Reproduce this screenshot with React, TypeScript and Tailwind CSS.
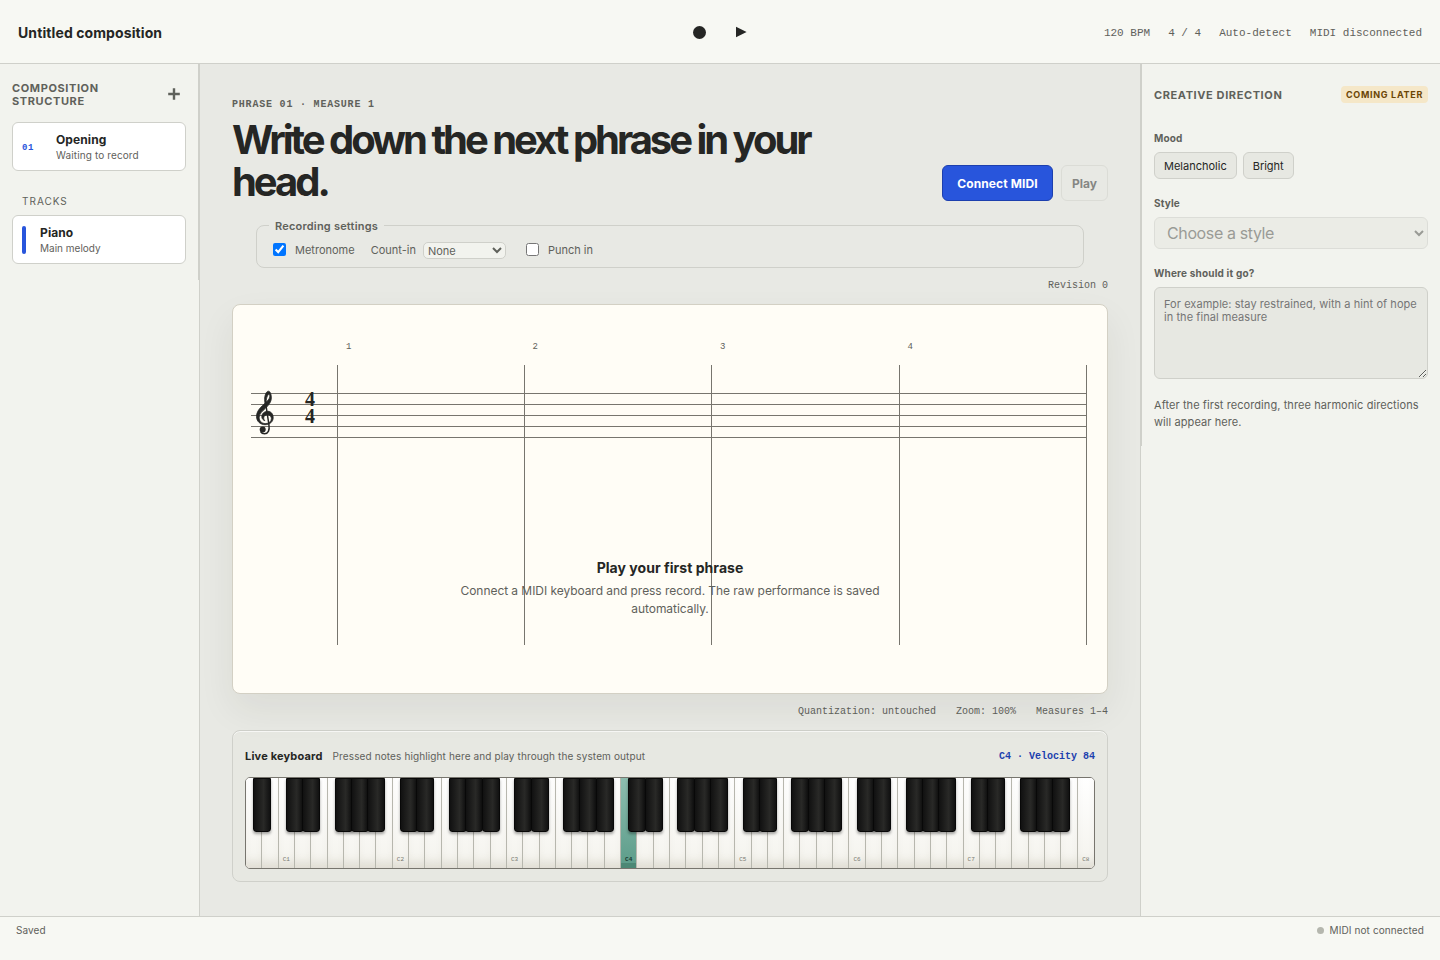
import { useState } from "react";

const WHITE_KEY_COUNT = 52;
const ACTIVE_KEY = 23;

// keyboard starts on A0, so C notes fall on index 2, 9, 16...
const isC = (i: number) => i % 7 === 2;
const octave = (i: number) => (i - 2) / 7 + 1;

// white key boundaries that carry a black key (A, C, D, F, G)
const BLACK_AFTER = [0, 2, 3, 5, 6];

const MONO = "font-['Liberation_Mono',monospace]";

const Header = () => (
  <header className="grid h-16 shrink-0 grid-cols-3 items-center border-b border-[#cfd0ca] bg-[#f7f8f3] px-[18px] pt-[3px]">
    <strong className="text-sm font-bold tracking-[0.1px]">Untitled composition</strong>
    <div className="flex items-center justify-center gap-[30px]">
      <button aria-label="Record" className="flex size-3 items-center justify-center">
        <span className="mb-0.5 size-[13px] shrink-0 rounded-full bg-[#252624]" />
      </button>
      <button aria-label="Play" className="-mt-0.5">
        <svg width="12" height="12" viewBox="0 0 12 12">
          <path d="M1 .8v10.400L11.600 6z" fill="#252624" />
        </svg>
      </button>
    </div>
    <div className="flex justify-end gap-[18px] whitespace-nowrap pt-px font-['Liberation_Mono',monospace] text-[11px] text-[#5f615b]">
      <span>120 BPM</span>
      <span>4 / 4</span>
      <span>Auto-detect</span>
      <span>MIDI disconnected</span>
    </div>
  </header>
);

const Structure = () => (
  <aside className="w-[200px] shrink-0 border-r border-[#cfd0ca] bg-[#f2f3ee]">
    <div className="h-[216px] border-r border-[#cfd0ca] px-3 pt-[18px]">
      <div className="flex h-[26px] items-center justify-between">
        <h2 className="w-[110px] text-[11px] font-bold uppercase leading-[13px] tracking-[0.6px] text-[#5f615b]">
          Composition structure
        </h2>
        <button aria-label="Add section" className="mb-0.5 mr-1.5">
          <svg width="12" height="12" viewBox="0 0 12 12" stroke="#5f615b" strokeWidth="2.4">
            <path d="M6 .2v11.6M.2 6h11.6" />
          </svg>
        </button>
      </div>
      <div className="mt-[14px] flex h-[49px] items-center rounded-md border border-[#cfd0ca] bg-white px-[9px]">
        <span className={`${MONO} w-[34px] pt-1 text-[9px] font-bold tracking-[0.5px] text-[#2855dc]`}>01</span>
        <div className="pt-0.5">
          <strong className="block text-xs font-bold leading-4 tracking-[0.1px]">Opening</strong>
          <small className="block text-[10px] leading-[15px] tracking-[0.12px] text-[#5f615b]">Waiting to record</small>
        </div>
      </div>
      <p className="ml-[10px] mt-[23px] h-[21px] text-[10px] leading-[15px] tracking-[0.1em] text-[#5f615b]">TRACKS</p>
      <div className="flex h-[49px] items-center rounded-md border border-[#cfd0ca] bg-white px-[9px]">
        <span className="mr-[14px] h-7 w-1 rounded-sm bg-[#2855dc]" />
        <div className="pt-0.5">
          <strong className="block text-xs font-bold leading-4 tracking-[0.1px]">Piano</strong>
          <small className="block text-[10px] leading-[15px] text-[#5f615b]">Main melody</small>
        </div>
      </div>
    </div>
  </aside>
);

const RecordingSettings = () => {
  const [metronome, setMetronome] = useState(true);
  const [punchIn, setPunchIn] = useState(false);

  return (
    <fieldset className="mx-6 mt-[17px] h-[49px] rounded-lg border border-[#cfd0ca] px-[12px] text-[11px] text-[#5f615b]">
      <legend className="px-1.5 font-semibold leading-[13px] tracking-[0.2px]">
        <span className="relative top-px">Recording settings</span>
      </legend>
      <div className="ml-1 mt-[7px] flex h-[22px] items-center pt-px">
        <input
          type="checkbox"
          className="mt-[-3px] size-[13px]"
          checked={metronome}
          onChange={(e) => setMetronome(e.target.checked)}
        />
        <span className="ml-[9px]">Metronome</span>
        <span className="ml-4">Count-in</span>
        <select className="-mt-px ml-[7px] h-[17px] w-[83px] rounded-[5px] border border-[#cfd0ca] bg-[#f2f3ee]">
          <option>None</option>
          <option>1 measure</option>
          <option>2 measures</option>
        </select>
        <input
          type="checkbox"
          className="ml-5 mt-[-3px] size-[13px]"
          checked={punchIn}
          onChange={(e) => setPunchIn(e.target.checked)}
        />
        <span className="ml-[9px]">Punch in</span>
      </div>
    </fieldset>
  );
};

const Score = () => (
  <section className="relative mt-[10px] h-[390px] rounded-lg border border-[#d3d0c4] bg-[#fffdf6] shadow-[0_16px_36px_rgba(38,40,34,0.07)]">
    <svg width="874" height="388" className="block">
      <g stroke="#77756e" strokeWidth="1" shapeRendering="crispEdges">
        {[88.5, 99.5, 110.5, 121.5, 132.5].map((y) => (
          <line key={y} x1="18" x2="854" y1={y} y2={y} />
        ))}
        {[104.5, 291.5, 478.5, 666.5, 853.5].map((x) => (
          <line key={x} x1={x} x2={x} y1="60" y2="340" />
        ))}
      </g>
      <g className="font-['Liberation_Mono',monospace] text-[9px]" fill="#5f615b">
        {[113, 299.5, 487, 674.5].map((x, i) => (
          <text key={x} x={x} y="44">
            {i + 1}
          </text>
        ))}
      </g>
      <text className="font-['Liberation_Serif',serif] text-[20px] font-bold" fill="#252624">
        <tspan x="72" y="101">4</tspan>
        <tspan x="72" y="118">4</tspan>
      </text>
      {/* treble clef */}
      <g fill="#252624">
        <path d="M36.8 92C36 97.500 23.500 102 23.500 111.500C23.500 116.500 27.500 119.700 32 119.700C36.800 119.700 40.200 116.800 40.200 112.600C40.200 108.800 37.800 106.300 34.800 106.300C31.200 106.300 28.800 108.800 28.800 111.600C28.800 113.600 30 115.200 31.800 115.700C30.900 114.600 30.600 113.600 30.800 112.400C31.100 110.800 32.500 109.700 34.300 109.700C36.700 109.700 38.400 111.300 38.400 113.600C38.400 116.600 35.900 118.600 32.600 118.600C28.600 118.600 26.200 116 26.200 112.400C26.200 105.500 38.400 102 38.400 92.600C38.400 89.600 37.200 86.200 35.500 86.200C33 86.200 31.600 90.800 31.600 94.500C31.600 96 31.900 98 32.200 99.500L33.400 98.400C32.900 95 33.600 90.600 35.900 89.300C36.700 89.200 36.900 90.800 36.800 92Z" stroke="#252624" strokeWidth=".8" />
        <path d="M32.600 98L35.900 119.500C36.900 125.500 35 128.700 31.600 128.700C30 128.700 28.500 128 27.600 126.500" fill="none" stroke="#252624" strokeWidth="1.500" />
        <circle cx="29.700" cy="124.600" r="3" />
      </g>
    </svg>
    <div className="absolute inset-x-0 top-[254px] text-center">
      <strong className="block text-sm font-bold leading-[18px] tracking-[0.04px]">Play your first phrase</strong>
      <p className="mx-auto mt-[5px] w-[430px] text-xs leading-[18px] tracking-[-0.055px] text-[#5f615b]">
        Connect a MIDI keyboard and press record. The raw performance is saved automatically.
      </p>
    </div>
  </section>
);

const Keyboard = () => {
  const keys = Array.from({ length: WHITE_KEY_COUNT }, (_, i) => i);

  return (
    <section className="mt-[11px] h-[152px] rounded-lg border border-[#cfd0ca] bg-[#e7e8e2] px-3 pt-[17px] shadow-[inset_0_1px_0_rgba(255,255,255,0.7)]">
      <div className="flex h-[17px] items-center">
        <strong className="text-[11px] font-bold tracking-[0.18px]">Live keyboard</strong>
        <span className="ml-[10px] text-[10px] tracking-[0.12px] text-[#5f615b]">
          Pressed notes highlight here and play through the system output
        </span>
        <span className={`${MONO} ml-auto text-[10px] font-bold text-[#1c3fae]`}>C4 · Velocity 84</span>
      </div>
      <div className="relative mt-[12px] grid h-[92px] grid-cols-[repeat(52,minmax(0,1fr))] overflow-hidden rounded-[5px] border border-[#77756e] bg-white">
        {keys.map((i) => (
          <div
            key={i}
            className={`flex items-end justify-center pb-[5px] font-['Liberation_Mono',monospace] text-[6px] leading-[7px] ${
              i < WHITE_KEY_COUNT - 1 ? "border-r border-[#b7b7ae]" : ""
            } ${
              i === ACTIVE_KEY
                ? "bg-linear-to-b from-[#8dbdaf] to-[#5b9c89] font-bold text-[#17382f] shadow-[inset_0_-5px_0_#4c8875]"
                : "bg-linear-to-b from-white to-[#f4f3ed] text-[#77786f] shadow-[inset_0_-10px_10px_-4px_rgba(90,80,50,0.13)]"
            }`}
          >
            {isC(i) && `C${octave(i)}`}
          </div>
        ))}
        {keys
          .filter((i) => i < WHITE_KEY_COUNT - 1 && BLACK_AFTER.includes(i % 7))
          .map((i) => (
            <div
              key={i}
              className="absolute top-0 h-[54px] w-[18px] -translate-x-1/2 rounded-b-[3px] border border-[#080808] bg-linear-to-r from-[#111] via-[#292927] via-60% to-[#111] shadow-[0_2px_3px_rgba(0,0,0,0.35)]"
              style={{ left: `${((i + 1) / WHITE_KEY_COUNT) * 100}%` }}
            />
          ))}
      </div>
    </section>
  );
};

const Direction = () => (
  <aside className="w-[300px] shrink-0 border-l border-[#cfd0ca] bg-[#f2f3ee]">
    <div className="h-[382px] border-l border-[#cfd0ca] px-3 pt-[22px] text-[#5f615b]">
      <div className="flex h-[17px] items-center justify-between">
        <h2 className="pt-px text-[11px] font-bold uppercase tracking-[0.6px]">Creative direction</h2>
        <span className="rounded bg-[#f5e7c8] px-[5px] text-[9px] font-bold leading-[17px] tracking-[0.7px] text-[#6b4505]">
          COMING LATER
        </span>
      </div>
      <p className="mt-[27px] text-[10px] font-bold leading-4 tracking-[0.16px]">Mood</p>
      <div className="mt-1.5 flex gap-1.5 text-[11px] text-[#252624]">
        <button className="h-[27px] rounded-md border border-[#cfd0ca] bg-[#e7e8e2] px-[9px] pt-0.5">Melancholic</button>
        <button className="h-[27px] rounded-md border border-[#cfd0ca] bg-[#e7e8e2] px-[9px] pt-0.5">Bright</button>
      </div>
      <p className="mt-4 text-[10px] font-bold leading-4 tracking-[0.16px]">Style</p>
      <select
        disabled
        className="mt-1.5 block h-8 w-full rounded-md border border-[#cfd0ca] bg-[#e7e8e2] px-2 text-base tracking-[-0.38px] text-[#5f615b] opacity-60"
      >
        <option>Choose a style</option>
      </select>
      <p className="mt-4 text-[10px] font-bold leading-4 tracking-[0.18px]">Where should it go?</p>
      <textarea
        className="mt-1.5 block h-[92px] w-full rounded-md border border-[#cfd0ca] bg-[#e7e8e2] px-[9px] pb-[9px] pt-[10px] text-[11px] leading-[13px] tracking-[0.06px] placeholder:text-[#757575]"
        placeholder="For example: stay restrained, with a hint of hope in the final measure"
      />
      <p className="mt-[18px] text-[11px] leading-[17px] tracking-[0.08px]">
        After the first recording, three harmonic directions will appear here.
      </p>
    </div>
  </aside>
);

const App = () => (
  <div className="flex h-[960px] w-[1440px] flex-col overflow-hidden bg-[#f7f8f3] font-[Inter,sans-serif] text-[#252624]">
    <Header />
    <div className="flex h-[852px]">
      <Structure />
      <main className="w-[940px] bg-[#e8e9e4] px-8 pt-8">
        <div className="flex items-end justify-between">
          <div>
            <p className={`${MONO} h-[22px] pt-px text-[10px] font-bold leading-4 tracking-[0.08em] text-[#5f615b]`}>
              PHRASE 01 · MEASURE 1
            </p>
            <h1 className="relative top-px w-[620px] text-[40px] font-bold leading-[42px] tracking-[-3.03px]">
              Write down the next phrase in your head.
            </h1>
          </div>
          <div className="mb-px flex gap-2 text-xs font-bold">
            <button className="h-9 w-[111px] rounded-md border border-[#1c3fae] bg-[#2855dc] pt-px tracking-[0.12px] text-white">
              Connect MIDI
            </button>
            <button disabled className="h-9 w-[47px] rounded-md border border-[#cfd0ca] pt-px opacity-50">
              Play
            </button>
          </div>
        </div>
        <RecordingSettings />
        <p className={`${MONO} mt-[10px] text-right text-[10px] leading-4 text-[#5f615b]`}>Revision 0</p>
        <Score />
        <div className={`${MONO} mt-[9px] flex h-4 items-center justify-end gap-5 text-[10px] text-[#5f615b]`}>
          <span>Quantization: untouched</span>
          <span>Zoom: 100%</span>
          <span>Measures 1–4</span>
        </div>
        <Keyboard />
      </main>
      <Direction />
    </div>
    <footer className="flex h-11 items-start justify-between border-t border-[#cfd0ca] px-4 pt-1.5 text-[10px] leading-[15px] tracking-[0.1px] text-[#5f615b]">
      <span>Saved</span>
      <span className="flex items-center gap-1.5">
        <i className="size-[7px] rounded-full bg-[#b5b7ae]" />
        MIDI not connected
      </span>
    </footer>
  </div>
);

export default App;
